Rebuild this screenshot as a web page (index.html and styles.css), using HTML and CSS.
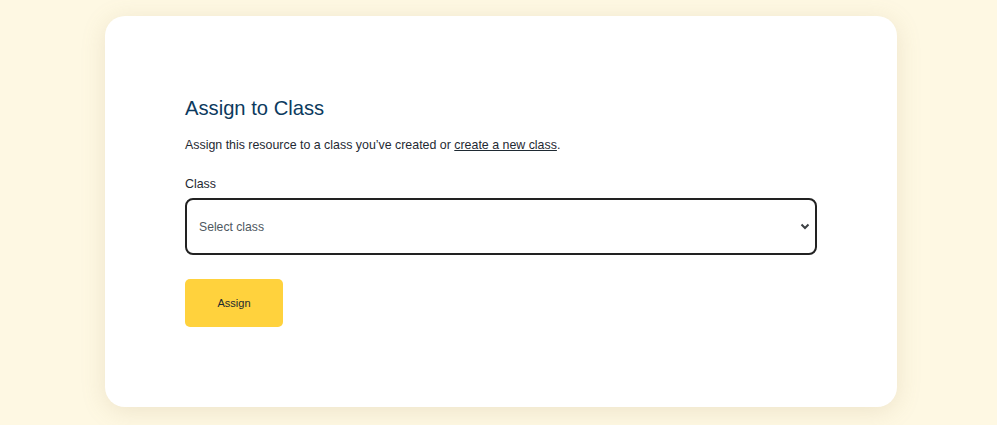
FILE: index.html
```html
<!DOCTYPE html>
<html lang="en">
<head>
<meta charset="utf-8">
<title>Assign to Class</title>
<link rel="stylesheet" href="styles.css">
</head>
<body>
<main class="page">
  <section class="card">
    <h1 class="title">Assign to Class</h1>
    <p class="intro">Assign this resource to a class you’ve created or <a href="#" class="link">create a new class</a>.</p>
    <label class="label" for="cls">Class</label>
    <div class="select-wrap">
      <select id="cls" class="select">
        <option>Select class</option>
      </select>
      <svg class="chev" width="10" height="7" viewBox="0 0 10 7"><path d="M1.5 1.5 L5 5 L8.5 1.5" fill="none" stroke="#3c4043" stroke-width="2"/></svg>
    </div>
    <button class="btn" type="button">Assign</button>
  </section>
</main>
</body>
</html>
```
FILE: styles.css
```css
html, body {
  margin: 0;
  padding: 0;
}
body {
  background: #fef8e3;
  font-family: "Liberation Sans", Arial, sans-serif;
  width: 997px;
  height: 425px;
  overflow: hidden;
}
.page {
  padding: 16px 0 0 105px;
}
.card {
  width: 792px;
  height: 391px;
  box-sizing: border-box;
  background: #ffffff;
  border-radius: 20px;
  box-shadow: 0 4px 24px rgba(160, 140, 90, 0.18);
  padding: 80px 80px;
  display: flex;
  flex-direction: column;
  align-items: flex-start;
}
.title {
  margin: 0;
  font-size: 20.2px;
  font-weight: 400;
  color: #0c3a5e;
  line-height: 24px;
}
.intro {
  margin: 17px 0 0;
  font-size: 12.4px;
  line-height: 16px;
  color: #1f2a33;
}
.link {
  color: #1f2a33;
  text-decoration: underline;
}
.label {
  margin-top: 24px;
  font-size: 12.4px;
  line-height: 14px;
  color: #1f2a33;
}
.select-wrap {
  position: relative;
  margin-top: 7px;
  width: 632px;
}
.select {
  appearance: none;
  -webkit-appearance: none;
  width: 632px;
  height: 57px;
  box-sizing: border-box;
  border: 2px solid #222;
  border-radius: 8px;
  background: #fff;
  padding: 0 12px;
  font-family: "Liberation Sans", Arial, sans-serif;
  font-size: 12.2px;
  color: #4f5961;
  display: block;
}
.chev {
  position: absolute;
  right: 7px;
  top: 25px;
  pointer-events: none;
}
.btn {
  margin-top: 24px;
  width: 98px;
  height: 48px;
  border: none;
  border-radius: 5px;
  background: #ffd23d;
  font-family: "Liberation Sans", Arial, sans-serif;
  font-size: 11px;
  color: #1d2a30;
  cursor: pointer;
}
```
